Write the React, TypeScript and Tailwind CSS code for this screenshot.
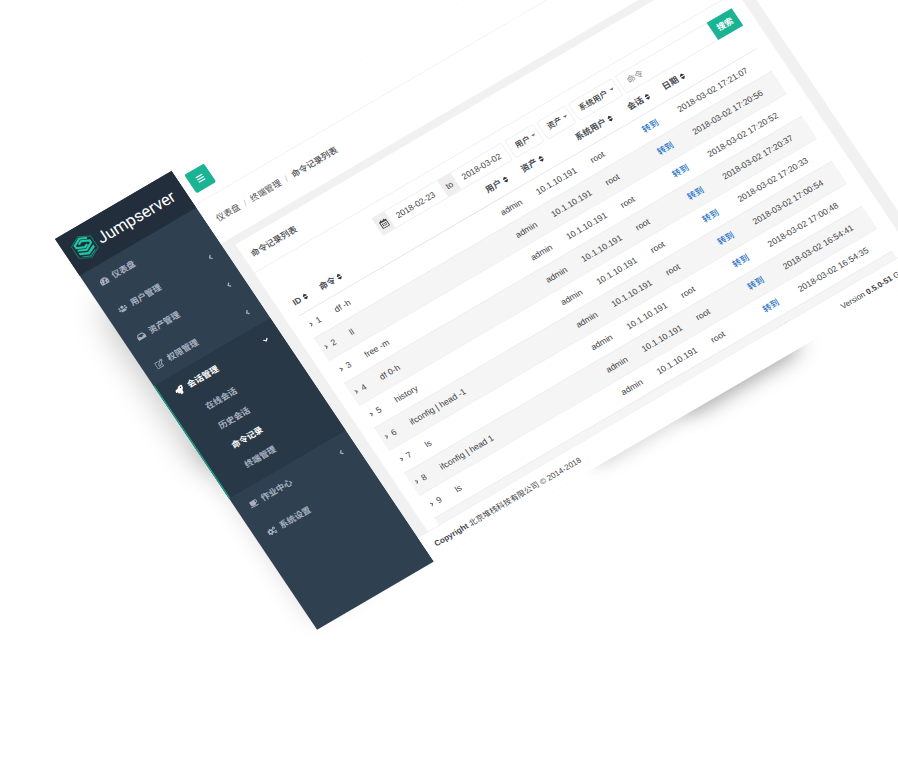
import React from "react";
import {
  FaTachometerAlt,
  FaUsers,
  FaInbox,
  FaRegEdit,
  FaRocket,
  FaCoffee,
  FaCogs,
  FaSort,
  FaBars,
  FaRegCalendarAlt,
  FaCaretDown,
  FaAngleLeft,
  FaAngleDown,
  FaAngleRight,
  FaChevronUp,
} from "react-icons/fa";

type IconType = React.ComponentType<{ className?: string }>;

const topItems: { label: string; icon: IconType; arrow: boolean }[] = [
  { label: "仪表盘", icon: FaTachometerAlt, arrow: false },
  { label: "用户管理", icon: FaUsers, arrow: true },
  { label: "资产管理", icon: FaInbox, arrow: true },
  { label: "权限管理", icon: FaRegEdit, arrow: true },
];

const bottomItems: { label: string; icon: IconType; arrow: boolean }[] = [
  { label: "作业中心", icon: FaCoffee, arrow: true },
  { label: "系统设置", icon: FaCogs, arrow: false },
];

const subItems = ["在线会话", "历史会话", "命令记录", "终端管理"];

const rows = [
  { id: 1, command: "df -h", time: "2018-03-02 17:21:07" },
  { id: 2, command: "ll", time: "2018-03-02 17:20:56" },
  { id: 3, command: "free -m", time: "2018-03-02 17:20:52" },
  { id: 4, command: "df 0-h", time: "2018-03-02 17:20:37" },
  { id: 5, command: "history", time: "2018-03-02 17:20:33" },
  { id: 6, command: "ifconfig | head -1", time: "2018-03-02 17:00:54" },
  { id: 7, command: "ls", time: "2018-03-02 17:00:48" },
  { id: 8, command: "ifconfig | head 1", time: "2018-03-02 16:54:41" },
  { id: 9, command: "ls", time: "2018-03-02 16:54:35" },
];

const columns = [
  { label: "ID", style: "w-[46px] pl-1" },
  { label: "命令", style: "w-[313px] pl-2" },
  { label: "用户", style: "w-[67px] pl-2" },
  { label: "资产", style: "w-[102px] pl-2" },
  { label: "系统用户", style: "w-[98px] pl-2" },
  { label: "会话", style: "w-[66px] pl-2" },
  { label: "日期", style: "pl-2" },
];

function Logo() {
  return (
    <svg viewBox="0 0 40 44" className="h-[44px] w-[40px]" fill="none" aria-hidden="true">
      <path d="M20 1.500 38 11v22L20 42.500 2 33V11Z" stroke="#167d6c" strokeWidth="1.500" />
      <path
        d="M31.500 10.500 20 5.500 7.500 12v4.500L20 22l6-2.500M14 13.500 20 10.500l12.500 6v4L20 27 7 21"
        stroke="#1fc8a5"
        strokeWidth="3.500"
      />
      <path d="M6 25l14 6.500L34 25v4.500L20 36 6 29.500Z" fill="#1fc8a5" />
      <path d="M8 33l12 5.500L32 33v1.500L20 40.500 8 34.500Z" fill="#1a9f86" />
    </svg>
  );
}

function MenuLink({ label, icon: Icon, arrow }: { label: string; icon: IconType; arrow: boolean }) {
  return (
    <li>
      <a href="#" className="flex h-[54px] items-center pr-[20px] pl-[21px] font-semibold text-[#a7b1c2]">
        <Icon className="mr-[8px] size-[15px]" />
        <span className="text-[14px]">{label}</span>
        {arrow && <FaAngleLeft className="ml-auto size-[13px]" />}
      </a>
    </li>
  );
}

function Sidebar() {
  return (
    <nav className="w-[220px] shrink-0 bg-[#2f4050]">
      <div className="flex h-[72px] items-center gap-[5px] bg-[#222e3b] pl-[13px]">
        <Logo />
        <span className="font-['Roboto',sans-serif] text-[27px] leading-none text-white">Jumpserver</span>
      </div>
      <ul>
        {topItems.map((item) => (
          <MenuLink key={item.label} {...item} />
        ))}
        <li className="border-l-2 border-[#19aa8d] bg-[#293846] pb-[14px]">
          <a href="#" className="flex h-[54px] items-center pr-[20px] pl-[22px] font-bold text-white">
            <FaRocket className="mr-[8px] size-[15px]" />
            <span className="text-[14px]">会话管理</span>
            <FaAngleDown className="ml-auto size-[13px]" />
          </a>
          <ul>
            {subItems.map((label) => (
              <li key={label}>
                <a
                  href="#"
                  className={
                    label === "命令记录"
                      ? "flex h-[38px] items-center pl-[50px] text-[14px] font-bold text-white"
                      : "flex h-[38px] items-center pl-[50px] text-[14px] font-semibold text-[#a7b1c2]"
                  }
                >
                  {label}
                </a>
              </li>
            ))}
          </ul>
        </li>
        {bottomItems.map((item) => (
          <MenuLink key={item.label} {...item} />
        ))}
      </ul>
    </nav>
  );
}

function FilterSelect({ label, width }: { label: string; width: string }) {
  return (
    <div className={"relative h-[34px] " + width}>
      <select
        aria-label={label}
        className="h-full w-full appearance-none rounded-[4px] border border-[#e5e6e7] bg-white pl-[10px] text-[13px] font-medium text-[#333]"
      >
        <option>{label}</option>
      </select>
      <FaCaretDown className="pointer-events-none absolute top-[10px] right-[4px] size-[11px] text-[#777]" />
    </div>
  );
}

function Filters() {
  return (
    <form className="mt-[19px] ml-[208px] flex h-[34px] gap-[6px]">
      <div className="flex w-[244px] rounded-[3px] border border-[#e5e6e7] text-[14px] text-[#444]">
        <span className="flex w-[23px] items-center justify-center bg-[#eeeeee]">
          <FaRegCalendarAlt className="size-[15px] text-[#444]" />
        </span>
        <input aria-label="开始日期" defaultValue="2018-02-23" className="w-[99px] min-w-0 pl-[12px]" />
        <span className="flex w-[25px] items-center justify-center bg-[#eeeeee]">to</span>
        <input aria-label="结束日期" defaultValue="2018-03-02" className="min-w-0 flex-1 pl-[12px]" />
      </div>
      <FilterSelect label="用户" width="w-[54px]" />
      <FilterSelect label="资产" width="w-[54px]" />
      <FilterSelect label="系统用户" width="w-[82px]" />
      <div className="flex">
        <input
          aria-label="命令"
          placeholder="命令"
          className="w-[173px] rounded-l-[3px] border border-[#e5e6e7] bg-white pl-[12px] text-[14px] placeholder:text-[#888]"
        />
        <button type="button" className="w-[47px] bg-[#1ab394] text-[14px] font-semibold text-white">
          搜索
        </button>
      </div>
    </form>
  );
}

function CommandTable() {
  return (
    <table className="mx-[21px] mt-[1px] w-[862px] table-fixed border-collapse text-left text-[14px] text-[#3f4346]">
      <thead>
        <tr className="h-[42px] border-b border-[#dddddd]">
          {columns.map((column) => (
            <th key={column.label} className={column.style}>
              <span className="flex items-center gap-[2px] font-bold whitespace-nowrap text-[#4a4f54]">
                <span className="text-[14px]">{column.label}</span>
                <FaSort className="size-[13px] text-[#333]" />
              </span>
            </th>
          ))}
        </tr>
      </thead>
      <tbody>
        {[...rows, { id: 10, command: "ls", time: "2018-03-02 16:54:30" }].map((row) => (
          <tr key={row.id} className="h-[44px] border-b border-[#e9e9e9] last:h-[40px] even:bg-[#f5f5f5]">
            <td className="pl-1">
              <span className="flex items-center gap-[4px]">
                <FaAngleRight className="size-[11px] text-[#666]" />
                {row.id}
              </span>
            </td>
            <td className="pl-2">{row.command}</td>
            <td className="pl-2">admin</td>
            <td className="pl-2">10.1.10.191</td>
            <td className="pl-2">root</td>
            <td className="pl-2">
              <a href="#" className="font-medium text-[#1f72c6]">
                转到
              </a>
            </td>
            <td className="pl-2 whitespace-nowrap">{row.time}</td>
          </tr>
        ))}
      </tbody>
    </table>
  );
}

function Content() {
  return (
    <div className="flex flex-1 flex-col bg-[#f1f1f2]">
      <header className="flex h-[68px] items-center border-b border-[#e7eaec] bg-white pl-[13px]">
        <button
          type="button"
          aria-label="菜单"
          className="flex h-[36px] w-[37px] items-center justify-center rounded-[3px] bg-[#1ab394] text-white"
        >
          <FaBars className="size-[14px]" />
        </button>
      </header>
      <ol className="flex h-[75px] items-center gap-[9px] bg-white pl-[17px] text-[14px] text-[#4c4f52]">
        <li>
          <a href="#">仪表盘</a>
        </li>
        <li className="text-[#bbb]">/</li>
        <li>
          <a href="#">终端管理</a>
        </li>
        <li className="text-[#bbb]">/</li>
        <li className="font-medium">命令记录列表</li>
      </ol>
      <section className="mx-[19px] mt-[13px] h-[562px] overflow-hidden bg-white">
        <div className="flex h-[56px] items-center justify-between border-b border-[#e7eaec] pr-[57px] pl-[13px]">
          <h1 className="text-[14px] font-medium text-[#45484b]">命令记录列表</h1>
          <FaChevronUp className="size-[10px] text-[#c4c4c4]" />
        </div>
        <Filters />
        <CommandTable />
      </section>
      <footer className="flex h-[47px] items-center justify-between border-t border-[#e7eaec] bg-white pr-[22px] pl-[17px] text-[13px] text-[#3f4346]">
        <p>
          <strong>Copyright</strong> 北京堆栈科技有限公司 © 2014-2018
        </p>
        <p>
          Version <strong>0.5.0-51</strong> GPLv2.
        </p>
      </footer>
    </div>
  );
}

export default function App() {
  return (
    <main className="relative h-screen overflow-hidden bg-white pt-[239px] pl-[55px] font-['Liberation_Sans','Noto_Sans_CJK_SC',sans-serif]">
      <div className="relative flex w-[1166px] origin-top-left [transform:matrix(0.5311,-0.3101,0.3426,0.5108,0,0)]">
        <div className="absolute top-[120px] left-[-12px] h-[360px] w-[120px] rounded-full bg-black/20 blur-[24px]" />
        <div className="absolute top-[400px] left-[-4px] h-[350px] w-[120px] bg-black/10 blur-[16px]" />
        <div className="absolute bottom-[-6px] left-[520px] h-[50px] w-[380px] rounded-full bg-black/15 blur-[12px]" />
        <div className="absolute bottom-[-10px] left-[690px] h-[60px] w-[230px] rounded-full bg-black/20 blur-[16px]" />
        <div className="relative flex w-full">
          <Sidebar />
          <Content />
        </div>
      </div>
    </main>
  );
}
